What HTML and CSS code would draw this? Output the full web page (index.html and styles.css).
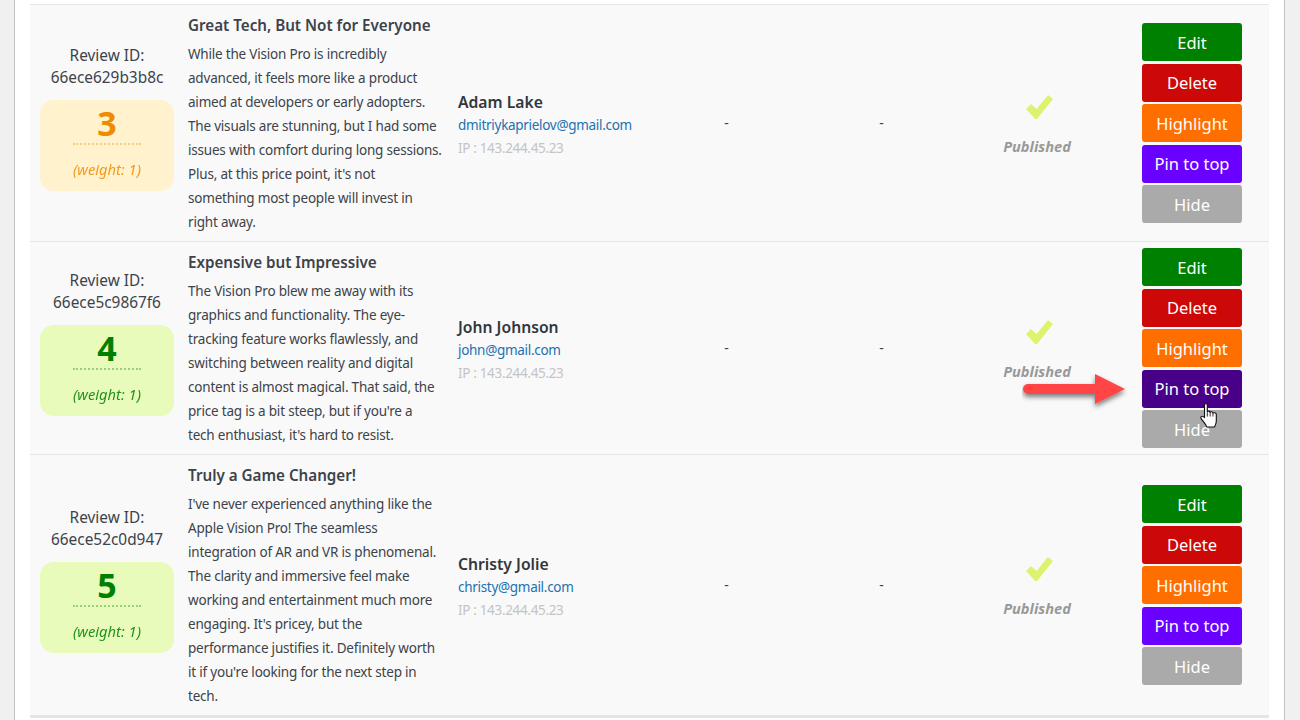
FILE: index.html
```html
<!DOCTYPE html>
<html lang="en">
<head>
<meta charset="utf-8">
<title>Reviews</title>
<link rel="stylesheet" href="styles.css">
</head>
<body>
<main class="panel">
  <section class="list">
    <article class="row">
      <div class="id-col">
        <div class="review-id">Review ID:<br>66ece629b3b8c</div>
        <div class="score score-mid"><div class="num">3</div><div class="weight">(weight: 1)</div></div>
      </div>
      <div class="body-col">
        <h3>Great Tech, But Not for Everyone</h3>
        <p>While the Vision Pro is incredibly advanced, it feels more like a product aimed at developers or early adopters. The visuals are stunning, but I had some issues with comfort during long sessions. Plus, at this price point, it's not something most people will invest in right away.</p>
      </div>
      <div class="author"><strong>Adam Lake</strong><a href="#">dmitriykaprielov@gmail.com</a><span>IP : 143.244.45.23</span></div>
      <div class="dash">-</div>
      <div class="dash">-</div>
      <div class="status">
        <svg class="check" viewBox="0 0 27 24"><path d="M0 14 L5 9 L10.5 14 L22 0 L27 4 L11 24 L9 24 Z"/></svg>
        <em>Published</em>
      </div>
      <div class="actions">
        <button class="edit">Edit</button><button class="del">Delete</button><button class="hl">Highlight</button><button class="pin">Pin to top</button><button class="hide">Hide</button>
      </div>
    </article>
    <article class="row">
      <div class="id-col">
        <div class="review-id">Review ID:<br>66ece5c9867f6</div>
        <div class="score score-good"><div class="num">4</div><div class="weight">(weight: 1)</div></div>
      </div>
      <div class="body-col">
        <h3>Expensive but Impressive</h3>
        <p>The Vision Pro blew me away with its graphics and functionality. The eye-tracking feature works flawlessly, and switching between reality and digital content is almost magical. That said, the price tag is a bit steep, but if you're a tech enthusiast, it's hard to resist.</p>
      </div>
      <div class="author"><strong>John Johnson</strong><a href="#">john@gmail.com</a><span>IP : 143.244.45.23</span></div>
      <div class="dash">-</div>
      <div class="dash">-</div>
      <div class="status">
        <svg class="check" viewBox="0 0 27 24"><path d="M0 14 L5 9 L10.5 14 L22 0 L27 4 L11 24 L9 24 Z"/></svg>
        <em>Published</em>
      </div>
      <div class="actions">
        <button class="edit">Edit</button><button class="del">Delete</button><button class="hl">Highlight</button><button class="pin hover">Pin to top</button><button class="hide">Hide</button>
      </div>
      <svg class="arrow" viewBox="0 0 112 40">
        <defs><filter id="sh" x="-20%" y="-40%" width="140%" height="200%"><feDropShadow dx="0" dy="3" stdDeviation="2.5" flood-color="#000" flood-opacity=".5"/></filter></defs>
        <path filter="url(#sh)" fill="#ff4444" d="M6 10 H73 V0 L103 15 L73 30 V20 H6 A5 5 0 0 1 6 10 Z"/>
      </svg>
      <svg class="hand" viewBox="0 0 16 24" preserveAspectRatio="none">
        <path fill="#fff" stroke="#111" stroke-width="1" stroke-linejoin="round" d="M4 1.5 C4 .5 6.5 .5 6.5 1.5 V8.5 C7 7.5 9 7.5 9 9 C9.5 8 11.5 8.2 11.5 9.8 C12 9 14.5 9.3 14.5 11 V17 C14.5 20 13.5 21 13 23 H6 C5.5 20.5 3 18 1 15 C0 13 2 11.5 4 14 Z"/>
        <path fill="none" stroke="#111" stroke-width=".8" d="M6.5 9 V13 M9 9 V13 M11.5 10 V13"/>
      </svg>
    </article>
    <article class="row">
      <div class="id-col">
        <div class="review-id">Review ID:<br>66ece52c0d947</div>
        <div class="score score-good"><div class="num">5</div><div class="weight">(weight: 1)</div></div>
      </div>
      <div class="body-col">
        <h3>Truly a Game Changer!</h3>
        <p>I've never experienced anything like the Apple Vision Pro! The seamless integration of AR and VR is phenomenal. The clarity and immersive feel make working and entertainment much more engaging. It's pricey, but the performance justifies it. Definitely worth it if you're looking for the next step in tech.</p>
      </div>
      <div class="author"><strong>Christy Jolie</strong><a href="#">christy@gmail.com</a><span>IP : 143.244.45.23</span></div>
      <div class="dash">-</div>
      <div class="dash">-</div>
      <div class="status">
        <svg class="check" viewBox="0 0 27 24"><path d="M0 14 L5 9 L10.5 14 L22 0 L27 4 L11 24 L9 24 Z"/></svg>
        <em>Published</em>
      </div>
      <div class="actions">
        <button class="edit">Edit</button><button class="del">Delete</button><button class="hl">Highlight</button><button class="pin">Pin to top</button><button class="hide">Hide</button>
      </div>
    </article>
  </section>
</main>
</body>
</html>
```
FILE: styles.css
```css
* { box-sizing: border-box; }
html, body { margin: 0; height: 720px; overflow: hidden; }
body {
  background: #f0f0f1;
  color: #3c434a;
  font-family: "Noto Sans", "Open Sans", sans-serif;
  font-size: 14px;
}
.panel {
  margin-left: 14px;
  width: 1271px;
  height: 720px;
  background: #fff;
  border-left: 1px solid #c3c4c7;
  border-right: 1px solid #c3c4c7;
  padding: 4px 15px 0;
}
.list { border-top: 1px solid #e5e5e5; }
.row {
  position: relative;
  display: grid;
  grid-template-columns: 158px 270px 190px 155px 155px 158px 152px;
  background: #f9f9f9;
  border-bottom: 1px solid #e5e5e5;
}
.row:last-child { border-bottom-width: 3px; }
.id-col {
  padding: 0 14px 10px 10px;
  display: flex;
  flex-direction: column;
  justify-content: center;
  text-align: center;
}
.review-id { font-size: 15.4px; line-height: 22px; margin-bottom: 11px; white-space: nowrap; }
.score { height: 91px; border-radius: 14px; padding-top: 3px; }
.score-mid { background: #fff2cc; color: #ee8c00; }
.score-good { background: #e8fbbb; color: #008000; }
.num {
  width: 68px;
  margin: 0 auto;
  height: 42px;
  line-height: 40px;
  font-size: 34px;
  font-weight: 700;
  border-bottom: 2px dotted rgba(238, 180, 60, .55);
}
.score-good .num { border-bottom-color: rgba(0, 128, 0, .35); }
.weight { font-style: italic; font-size: 14.7px; line-height: 20px; margin-top: 14px; opacity: .85; }
.body-col { padding: 10px 16px 7px 0; }
.body-col h3 { margin: 0 0 6px; font-size: 15.2px; font-weight: 600; line-height: 21px; }
.body-col p { margin: 0; line-height: 24px; font-size: 13.5px; letter-spacing: -.2px; }
.author { display: flex; flex-direction: column; justify-content: center; padding-top: 4px; }
.author strong { font-size: 15.7px; line-height: 24px; font-weight: 600; color: #32373c; }
.author a { color: #2271b1; text-decoration: none; font-size: 13.5px; line-height: 22px; letter-spacing: -.3px; }
.author span { color: #c3c4c7; font-size: 13.5px; line-height: 24px; letter-spacing: -.33px; }
.dash { display: flex; align-items: center; justify-content: center; padding: 0 0 2px 2px; }
.status { display: flex; flex-direction: column; align-items: center; justify-content: center; padding-top: 4px; }
.check { width: 27px; height: 24px; fill: #dff26e; margin: 0 0 17px 4px; }
.status em { font-weight: 700; color: #999; font-size: 14.6px; line-height: 20px; }
.actions { display: flex; flex-direction: column; align-items: center; justify-content: center; gap: 2.5px; }
.actions button {
  width: 100px;
  height: 38px;
  border: 0;
  border-radius: 3px;
  color: #fff;
  font: 400 16.5px/36px "Noto Sans", sans-serif;
  padding: 1px 0 0;
}
.edit { background: #008000; }
.del { background: #cc0808; }
.hl { background: #ff6f00; }
.pin { background: #6a00ff; }
.pin.hover { background: #480088; }
.hide { background: #aaa; }
.arrow { position: absolute; left: 992px; top: 132px; width: 112px; height: 40px; }
.hand { position: absolute; left: 1170px; top: 161px; width: 18px; height: 25px; }
```
